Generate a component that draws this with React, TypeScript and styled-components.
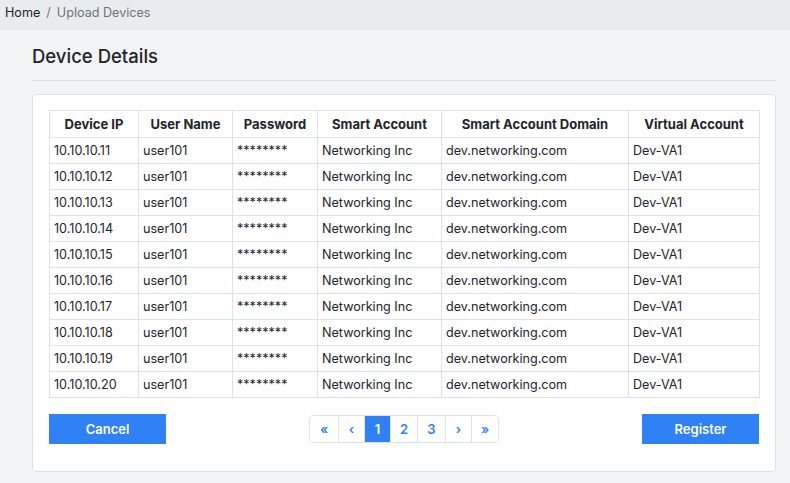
import React from "react";
import styled, { createGlobalStyle } from "styled-components";

const Global = createGlobalStyle`
  html, body { margin: 0; padding: 0; }
  body {
    background: #f3f4f6;
    font-family: Inter, "Liberation Sans", Arial, sans-serif;
    color: #212529;
    -webkit-font-smoothing: antialiased;
  }
  * { box-sizing: border-box; }
`;

const Breadcrumb = styled.nav`
  height: 30px;
  background: #e9ecef;
  display: flex;
  align-items: center;
  padding: 0 5px 5px;
  font-size: 12.6px;
`;

const Crumb = styled.span<{ $active?: boolean }>`
  color: ${(p) => (p.$active ? "#6c757d" : "#212529")};
`;

const Sep = styled.span`
  color: #6c757d;
  padding: 0 6px;
`;

const Main = styled.main`
  padding: 0 14px 0 32px;
`;

const Heading = styled.h1`
  margin: 0;
  padding: 14px 0 12px;
  font-size: 18.5px;
  font-weight: 500;
  line-height: 24px;
  border-bottom: 1px solid #dadde1;
`;

const Card = styled.section`
  margin-top: 13px;
  background: #fff;
  border: 1px solid #dee2e6;
  border-radius: 4px;
  padding: 15px 16px 27px;
`;

const Table = styled.table`
  width: 710px;
  border-collapse: collapse;
  table-layout: fixed;
  font-size: 12.6px;
`;

const Th = styled.th`
  border: 1px solid #dee2e6;
  font-size: 13px;
  font-weight: 700;
  text-align: center;
  height: 27px;
  padding: 0 4px;
`;

const Td = styled.td`
  border: 1px solid #dee2e6;
  height: 26px;
  padding: 0 4px;
  white-space: nowrap;
`;

const Footer = styled.div`
  margin-top: 16px;
  width: 710px;
  display: flex;
  justify-content: space-between;
  align-items: center;
`;

const Button = styled.button`
  width: 117px;
  height: 30px;
  border: none;
  background: #3080f6;
  color: #fff;
  font-family: inherit;
  font-size: 13px;
  font-weight: 600;
  cursor: pointer;
`;

const Pager = styled.ul`
  display: flex;
  list-style: none;
  margin: 0;
  padding: 0;
  border: 1px solid #dee2e6;
  border-radius: 4px;
  overflow: hidden;
  height: 28px;
`;

const PageItem = styled.li<{ $active?: boolean; $w: number }>`
  width: ${(p) => p.$w}px;
  display: flex;
  align-items: center;
  justify-content: center;
  font-size: 13px;
  font-weight: 600;
  color: ${(p) => (p.$active ? "#fff" : "#3080f6")};
  background: ${(p) => (p.$active ? "#3080f6" : "#fff")};
  & + & {
    border-left: 1px solid #dee2e6;
  }
`;

const cols = [89, 94, 85, 124, 187, 131];
const headers = [
  "Device IP",
  "User Name",
  "Password",
  "Smart Account",
  "Smart Account Domain",
  "Virtual Account",
];
const rows = Array.from({ length: 10 }, (_, i) => [
  `10.10.10.${11 + i}`,
  "user101",
  "********",
  "Networking Inc",
  "dev.networking.com",
  "Dev-VA1",
]);

const pages: { label: string; w: number; active?: boolean }[] = [
  { label: "«", w: 28 },
  { label: "‹", w: 26 },
  { label: "1", w: 26, active: true },
  { label: "2", w: 27 },
  { label: "3", w: 28 },
  { label: "›", w: 26 },
  { label: "»", w: 27 },
];

export default function App() {
  return (
    <>
      <Global />
      <Breadcrumb>
        <Crumb>Home</Crumb>
        <Sep>/</Sep>
        <Crumb $active>Upload Devices</Crumb>
      </Breadcrumb>
      <Main>
        <Heading>Device Details</Heading>
        <Card>
          <Table>
            <colgroup>
              {cols.map((w, i) => (
                <col key={i} style={{ width: w }} />
              ))}
            </colgroup>
            <thead>
              <tr>
                {headers.map((h) => (
                  <Th key={h}>{h}</Th>
                ))}
              </tr>
            </thead>
            <tbody>
              {rows.map((r) => (
                <tr key={r[0]}>
                  {r.map((c, j) => (
                    <Td key={j}>{c}</Td>
                  ))}
                </tr>
              ))}
            </tbody>
          </Table>
          <Footer>
            <Button>Cancel</Button>
            <Pager>
              {pages.map((p) => (
                <PageItem key={p.label} $w={p.w} $active={p.active}>
                  {p.label}
                </PageItem>
              ))}
            </Pager>
            <Button>Register</Button>
          </Footer>
        </Card>
      </Main>
    </>
  );
}
